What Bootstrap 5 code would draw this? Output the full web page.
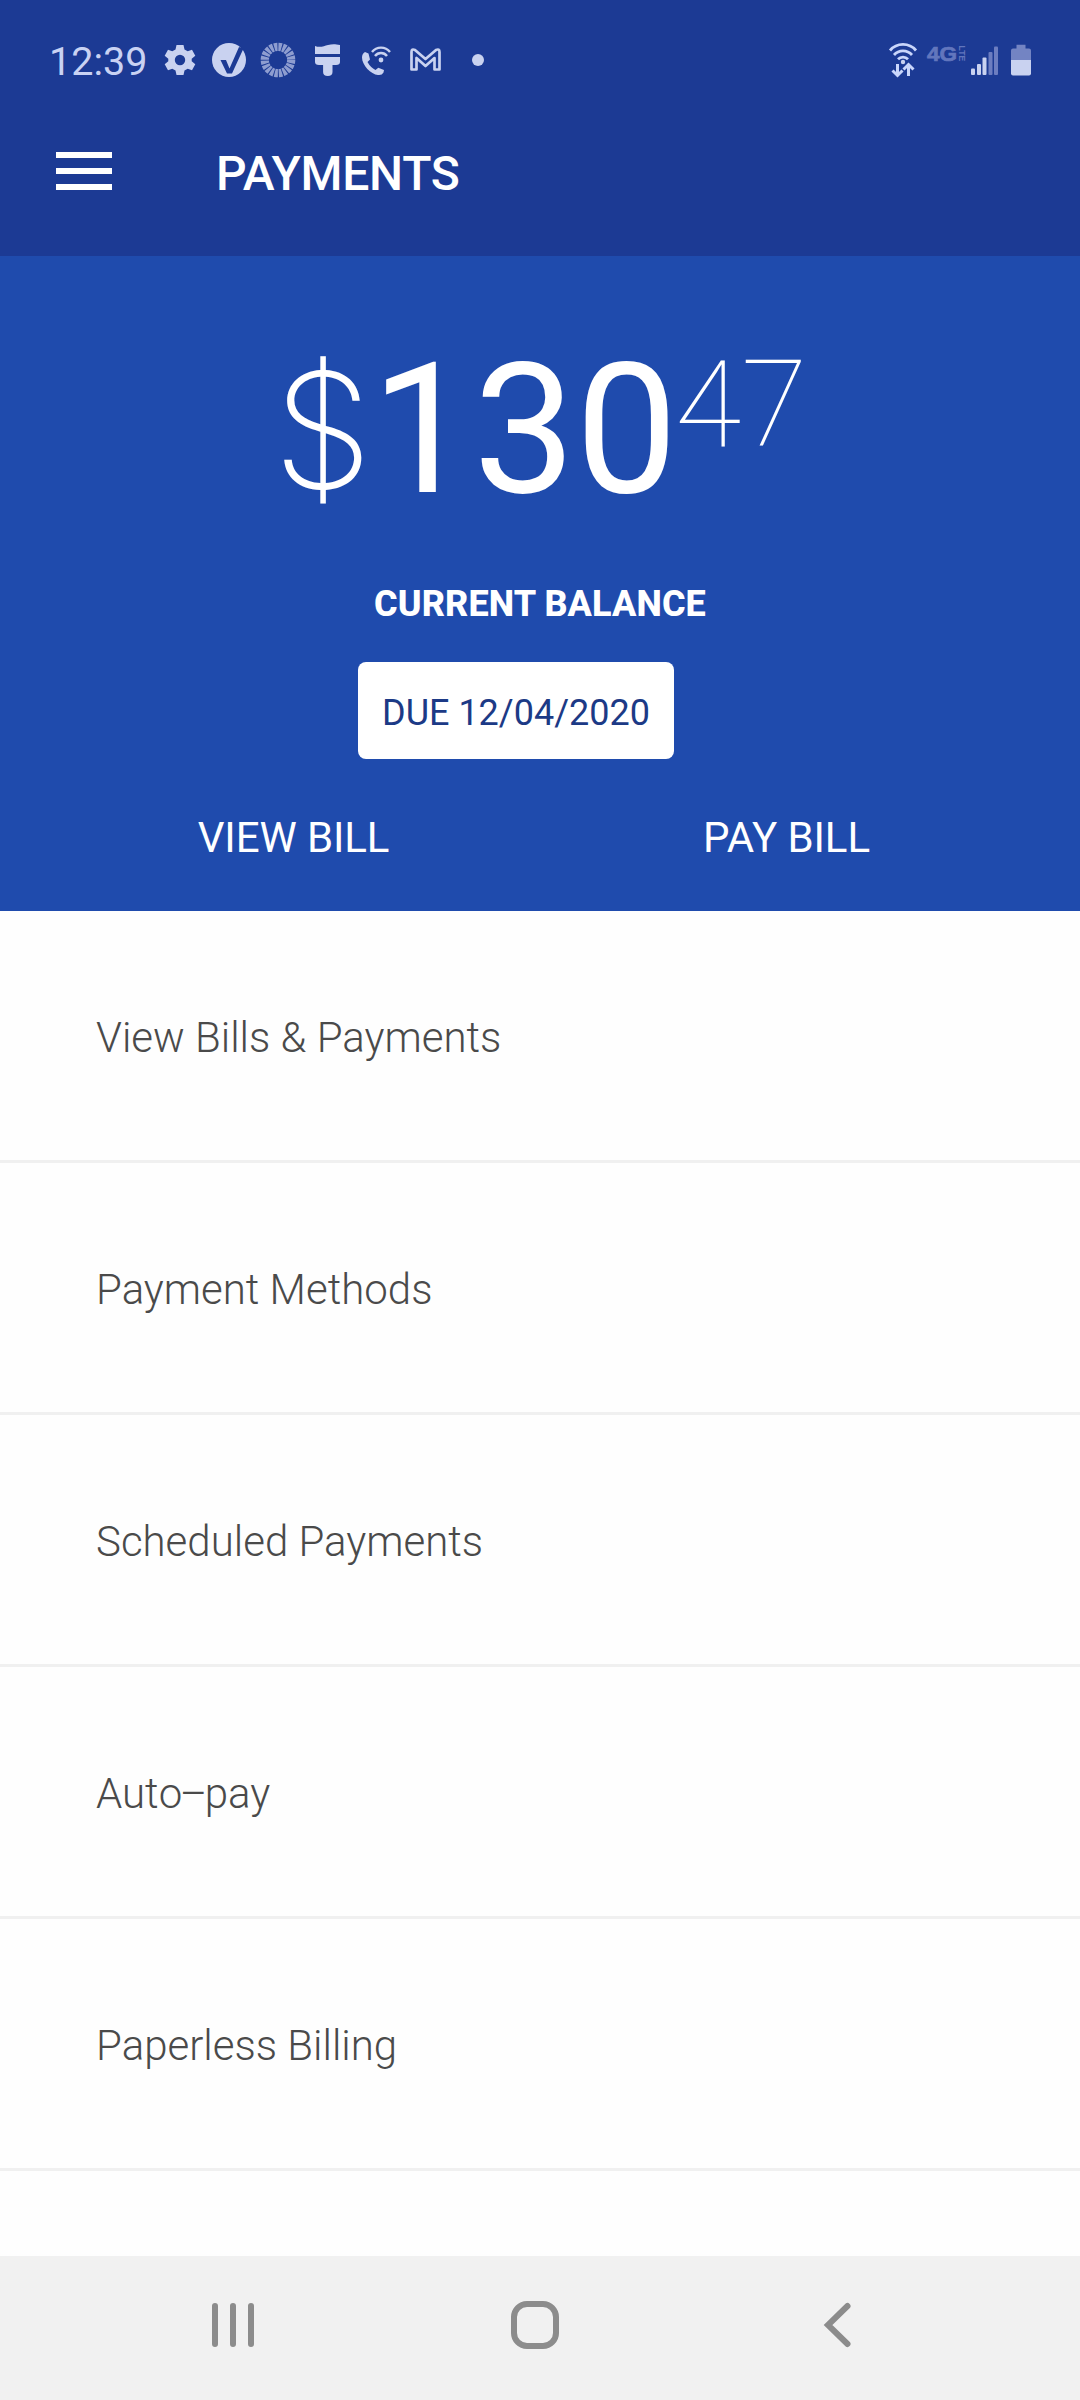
<!DOCTYPE html>
<html lang="en">
<head>
<meta charset="utf-8">
<meta name="viewport" content="width=device-width, initial-scale=1">
<title>Payments</title>
<link href="https://cdn.jsdelivr.net/npm/bootstrap@5.3.0/dist/css/bootstrap.min.css" rel="stylesheet">
<style>
body{font-family:Roboto,"Liberation Sans",sans-serif;color:#4a4a4a;line-height:1}
.screen{width:1080px;height:2400px;overflow:hidden}
.app-top{background:#1c3a94;height:256px}
.status{height:120px;padding:0 49px 0 49px;color:#c9d2f3}
.clock{font-size:39.5px;line-height:40px;padding-top:4px;width:114px}
.title-bar{height:102px;padding-left:56px}
.burger{width:56px;height:38px;padding:0;border:0;background:none;display:flex;flex-direction:column;gap:10px}
.burger span{height:6px;background:#fff}
.page-title{font-size:48px;font-weight:500;line-height:56px;margin:5px 0 0 104px;letter-spacing:-.3px}
.balance{background:#1f4bad;height:655px;padding-top:83px}
.amount{height:188px;margin-left:273px}
.cur{font-family:Inter,Roboto,sans-serif;font-size:160px;font-weight:200;line-height:160px;margin-top:11px;width:98px}
.whole{font-size:182px;font-weight:450;line-height:182px;margin-top:0;width:304px}
.cents{font-size:121px;font-weight:100;line-height:121px;margin-top:6px}
.caption{font-size:36px;font-weight:800;line-height:42px;margin-top:56px;letter-spacing:.1px}
.due{background:#fff;color:#1c3a86;width:316px;height:97px;border-radius:8px;font-size:36px;margin:37px 0 0 358px;padding-top:5px}
.actions{width:986px;margin:55px 0 0 47px;font-size:42px;line-height:48px;letter-spacing:-.1px}
.actions a{color:#fff;text-decoration:none}
.options{height:1345px;background:#fefefe}
.options .list-group-item{height:252px;border:0;border-bottom:3px solid #f0f0f0!important;padding:4px 0 0 96px;font-size:42px;font-weight:300;color:#4a4a4a;background:#fefefe}
.dash{letter-spacing:-2.4px}
.sysnav{height:144px;background:#f1f1f1}
</style>
<script src="https://cdn.jsdelivr.net/npm/bootstrap@5.3.0/dist/js/bootstrap.bundle.min.js"></script>
</head>
<body>
<main class="screen d-flex flex-column">
  <header class="app-top">
    <div class="status d-flex align-items-center justify-content-between">
      <div class="d-flex align-items-center">
        <div class="clock">12:39</div>
        <svg width="322" height="40" viewBox="163 40 322 40" fill="#c9d2f0">
          <g transform="translate(180 60)">
            <path fill-rule="evenodd" d="M-3.500-15h7l1 4.500l3.200 1.800l4.300-1.500l3.300 6l-3.600 3v2.400l3.600 3l-3.300 6l-4.300-1.500l-3.200 1.800l-1 4.500h-7l-1-4.500l-3.200-1.800l-4.300 1.500l-3.300-6l3.600-3v-2.400l-3.600-3l3.300-6l4.300 1.500l3.200-1.800zM0-5.200a5.200 5.200 0 1 0 0 10.400a5.200 5.200 0 1 0 0-10.400z"/>
          </g>
          <circle cx="229" cy="60" r="17"/>
          <path d="M220.500 60h5.500l3.500 8.500L239 47l4.500 1.500L232 73.500h-5z" fill="#1c3a94"/>
          <circle cx="278" cy="60" r="13.200" fill="none" stroke="#8e9dd0" stroke-width="8.200" stroke-dasharray="3.200 .947"/>
          <path d="M315 46c5 2 9 0 13-1c4-1 7-1 12 0v9h-25zM315 57h25v5q0 3-4 3h-3.500v7q0 4-4.700 4t-4.700-4v-7H319q-4 0-4-3z"/>
          <path d="M365 52l3.500 1.500l1.500 6l-2.500 2.500q3 5.500 8 8l2.800-2.300l5.700 2.300l-.5 2.500q-1.500 3-5.500 2.500c-7-.5-16-10-16-17.500q0-4 3-5.500z"/>
          <circle cx="381" cy="60" r="2.400"/>
          <path d="M375 56a7.500 7.500 0 0 1 12 0M372 52a11.500 11.500 0 0 1 18 0" fill="none" stroke="#c9d2f0" stroke-width="2.400"/>
          <path d="M411.500 69.500V52q0-3.600 3.500-2l10.500 9l10.500-9q3.500-1.600 3.500 2v17.500h-5V58L425.500 66L416.500 58v11.500z" fill="none" stroke="#c9d2f0" stroke-width="2.700" stroke-linejoin="round"/>
          <circle cx="478" cy="60" r="6"/>
        </svg>
      </div>
      <svg width="144" height="40" viewBox="887 40 144 40" fill="#c9d2f0">
        <g fill="none" stroke="#c9d6fb" stroke-width="2.800">
          <path d="M890 50.500a17 17 0 0 1 26 0M894 55a12 12 0 0 1 18 0M898 59.200a7 7 0 0 1 10 0"/>
          <path d="M897.500 64v11M892.500 70.500l5 5l5-5M908.500 76V65M903.500 69.500l5-5l5 5" stroke-width="3"/>
        </g>
        <circle cx="903" cy="62" r="2.200"/>
        <g fill="#6276bd" font-family="Liberation Sans, sans-serif" font-weight="700">
          <text x="927" y="61" font-size="21" textLength="30" lengthAdjust="spacingAndGlyphs" stroke="#6276bd" stroke-width=".7">4G</text>
          <text transform="translate(958.500 45.500) rotate(90)" font-size="9" textLength="16" lengthAdjust="spacingAndGlyphs">LTE</text>
        </g>
        <rect x="971" y="68.500" width="4" height="6.500" rx="1"/>
        <rect x="977" y="64" width="4" height="11" rx="1"/>
        <rect x="982.500" y="57.500" width="4" height="17.500" rx="1"/>
        <rect x="988.500" y="52" width="4" height="23" rx="1" fill="#6c7dc0"/>
        <rect x="994" y="46.500" width="4" height="28.500" rx="1" fill="#6c7dc0"/>
        <path d="M1016.500 48.500v-3.700h9v3.700h3.500q2 0 2 2V60h-20v-9.500q0-2 2-2z" fill="#7384c3"/>
        <path d="M1011 60h20v13.500q0 2-2 2h-16q-2 0-2-2z"/>
      </svg>
    </div>
    <div class="title-bar d-flex align-items-center">
      <button class="burger" type="button" aria-label="Menu"><span></span><span></span><span></span></button>
      <h1 class="page-title text-white mb-0">PAYMENTS</h1>
    </div>
  </header>

  <section class="balance text-white">
    <div class="amount d-flex align-items-start">
      <span class="cur">$</span><span class="whole">130</span><span class="cents">47</span>
    </div>
    <div class="caption text-center">CURRENT BALANCE</div>
    <div class="due d-flex align-items-center justify-content-center">DUE 12/04/2020</div>
    <nav class="actions row g-0 text-center">
      <a class="col" href="#">VIEW BILL</a>
      <a class="col" href="#">PAY BILL</a>
    </nav>
  </section>

  <div class="options list-group list-group-flush rounded-0">
    <a class="list-group-item d-flex align-items-center" href="#">View Bills &amp; Payments</a>
    <a class="list-group-item d-flex align-items-center" href="#">Payment Methods</a>
    <a class="list-group-item d-flex align-items-center" href="#">Scheduled Payments</a>
    <a class="list-group-item d-flex align-items-center" href="#"><span>Aut<span class="dash">o–</span>pay</span></a>
    <a class="list-group-item d-flex align-items-center" href="#">Paperless Billing</a>
  </div>

  <footer class="sysnav">
    <svg class="d-block" width="1080" height="144" viewBox="0 0 1080 144" fill="none" stroke="#8c8c8c" stroke-width="6" stroke-linecap="round" stroke-linejoin="round">
      <path d="M215 50v38M233 50v38M251 50v38"/>
      <rect x="514" y="48" width="42" height="42" rx="13"/>
      <path d="M847.500 50l-19.500 19l19.500 19" stroke-linejoin="miter"/>
    </svg>
  </footer>
</main>
</body>
</html>
